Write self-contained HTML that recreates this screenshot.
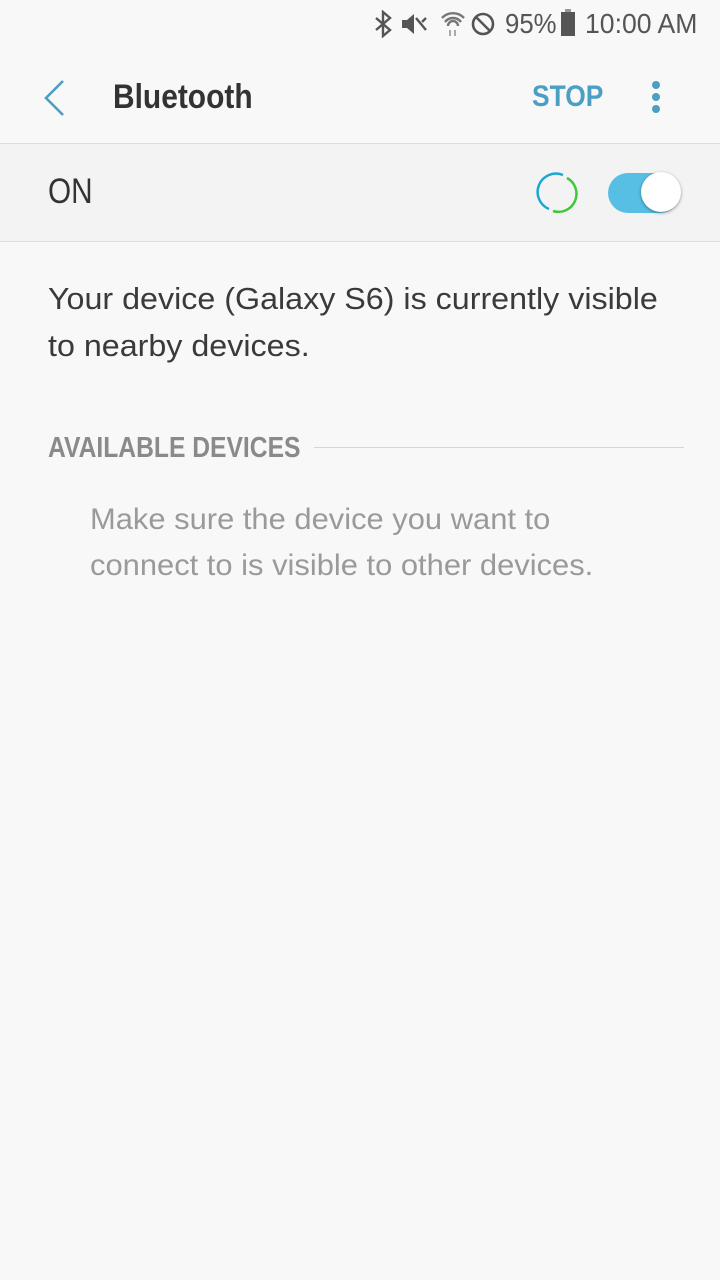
<!DOCTYPE html>
<html><head><meta charset="utf-8"><style>
body{margin:0;width:720px;height:1280px;background:#f8f8f8;font-family:"Liberation Sans",sans-serif;position:relative;overflow:hidden;color:#333}
.a{position:absolute;white-space:nowrap;transform-origin:0 0}
</style></head><body>
<!-- status bar -->
<svg class="a" style="left:372px;top:10px" width="30" height="28" viewBox="0 0 30 28"><path d="M4 8l14 12-7 6V2l7 6L4 20" fill="none" stroke="#555" stroke-width="2.4"/></svg>
<svg class="a" style="left:400px;top:12px" width="30" height="26" viewBox="0 0 30 26"><path d="M2 8h5l7-6v20l-7-6H2z" fill="#555"/><path d="M16 6l10 12M26 6l-4 4" stroke="#555" stroke-width="2.4"/></svg>
<svg class="a" style="left:440px;top:10px" width="26" height="28" viewBox="0 0 26 28"><path d="M2 8a15 15 0 0 1 22 0M5 12a10 10 0 0 1 16 0M8 16a5 5 0 0 1 10 0" fill="none" stroke="#777" stroke-width="2.4"/><path d="M10 20v6M15 20v6" stroke="#aaa" stroke-width="2"/></svg>
<svg class="a" style="left:470px;top:11px" width="26" height="26" viewBox="0 0 26 26"><circle cx="13" cy="13" r="10" fill="none" stroke="#555" stroke-width="2.6"/><path d="M6 6l14 14" stroke="#555" stroke-width="2.6"/></svg>
<div class="a" style="left:505px;top:8px;font-size:28px;color:#555;transform:scaleX(.92)">95%</div>
<div class="a" style="left:561px;top:12px;width:14px;height:24px;background:#555"></div>
<div class="a" style="left:565px;top:9px;width:6px;height:3px;background:#999"></div>
<div class="a" style="left:585px;top:8px;font-size:28px;color:#555;transform:scaleX(.95)">10:00 AM</div>
<!-- app bar -->
<svg class="a" style="left:40px;top:78px" width="30" height="40" viewBox="0 0 30 40"><path d="M23 3L6 20l17 17" fill="none" stroke="#4a9fc2" stroke-width="2.6"/></svg>
<div class="a" style="left:113px;top:78px;font-size:34px;font-weight:bold;color:#333;transform:scaleX(.88)">Bluetooth</div>
<div class="a" style="left:532px;top:80px;font-size:30px;font-weight:bold;color:#4a9fc2;transform:scaleX(.88)">STOP</div>
<div class="a" style="left:652px;top:81px;width:8px;height:8px;border-radius:50%;background:#4a9fc2"></div>
<div class="a" style="left:652px;top:93px;width:8px;height:8px;border-radius:50%;background:#4a9fc2"></div>
<div class="a" style="left:652px;top:105px;width:8px;height:8px;border-radius:50%;background:#4a9fc2"></div>
<!-- ON row -->
<div class="a" style="left:0;top:143px;width:720px;height:97px;background:#f3f3f3;border-top:1px solid #ddd;border-bottom:1px solid #ddd"></div>
<div class="a" style="left:48px;top:172px;font-size:35px;color:#333;transform:scaleX(.85)">ON</div>
<svg class="a" style="left:534px;top:170px" width="46" height="46" viewBox="0 0 46 46"><path d="M15 39A18 18 0 0 1 29 5" fill="none" stroke="#1aa8d0" stroke-width="2.5"/><path d="M33 8A18 18 0 0 1 19 41" fill="none" stroke="#3ec83a" stroke-width="2.5"/></svg>
<div class="a" style="left:608px;top:173px;width:72px;height:40px;border-radius:20px;background:#57bfe3"></div>
<div class="a" style="left:641px;top:172px;width:40px;height:40px;border-radius:50%;background:#fff;box-shadow:0 1px 3px rgba(0,0,0,.4)"></div>
<!-- body -->
<div class="a" style="left:48px;top:275px;font-size:31px;line-height:47px;color:#3a3a3a;transform:scaleX(1.04)">Your device (Galaxy S6) is currently visible<br>to nearby devices.</div>
<div class="a" style="left:48px;top:432px;font-size:29px;font-weight:bold;color:#8a8a8a;transform:scaleX(.85)">AVAILABLE DEVICES</div>
<div class="a" style="left:314px;top:447px;width:370px;height:1px;background:#d6d6d6"></div>
<div class="a" style="left:90px;top:497px;font-size:30px;line-height:46px;color:#9a9a9a;transform:scaleX(1.03)">Make sure the device you want to<br>connect to is visible to other devices.</div>
</body></html>
